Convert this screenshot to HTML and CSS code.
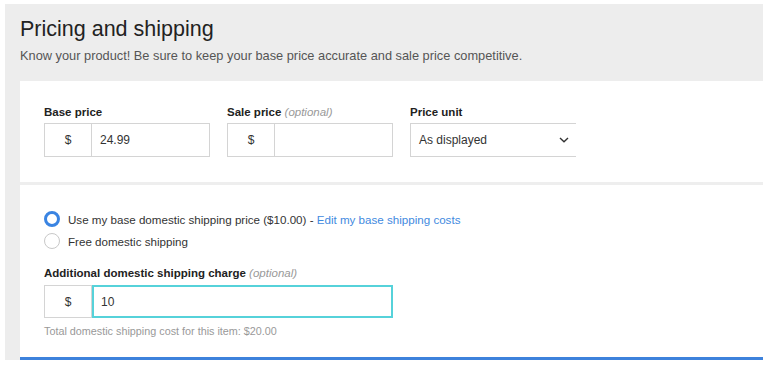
FILE: index.html
```html
<!DOCTYPE html>
<html lang="en">
<head>
<meta charset="utf-8">
<title>Pricing and shipping</title>
<link rel="stylesheet" href="styles.css">
</head>
<body>
<div class="panel">
  <header class="panel-head">
    <h1 class="title">Pricing and shipping</h1>
    <p class="subtitle">Know your product! Be sure to keep your base price accurate and sale price competitive.</p>
  </header>
  <div class="card">
    <section class="section prices">
      <div class="field">
        <label class="label">Base price</label>
        <div class="input-group">
          <span class="prefix">$</span>
          <span class="value">24.99</span>
        </div>
      </div>
      <div class="field">
        <label class="label">Sale price <em class="optional">(optional)</em></label>
        <div class="input-group">
          <span class="prefix">$</span>
          <span class="value"></span>
        </div>
      </div>
      <div class="field">
        <label class="label">Price unit</label>
        <div class="select">
          <span class="value">As displayed</span>
          <svg class="chevron" width="10" height="6" viewBox="0 0 10 6"><path d="M1 1 L5 4.8 L9 1" fill="none" stroke="#333" stroke-width="1.4"/></svg>
        </div>
      </div>
    </section>
    <section class="section shipping">
      <div class="radio-row">
        <span class="radio radio-on"></span>
        <span class="radio-text">Use my base domestic shipping price ($10.00) - <a class="link" href="#">Edit my base shipping costs</a></span>
      </div>
      <div class="radio-row">
        <span class="radio"></span>
        <span class="radio-text">Free domestic shipping</span>
      </div>
      <label class="label label-extra">Additional domestic shipping charge <em class="optional">(optional)</em></label>
      <div class="input-group wide">
        <span class="prefix">$</span>
        <span class="value focused">10</span>
      </div>
      <p class="helper">Total domestic shipping cost for this item: $20.00</p>
    </section>
  </div>
</div>
</body>
</html>
```

FILE: styles.css
```css
* { box-sizing: border-box; }

body {
  margin: 0;
  background: #ffffff;
  font-family: "Liberation Sans", Arial, Helvetica, sans-serif;
  color: #222;
}

.panel {
  margin: 4px 0 0 5px;
  width: 758px;
  background: #ededed;
  padding: 12px 0 0 15px;
}

.title {
  margin: 0;
  font-size: 21.5px;
  line-height: 26px;
  font-weight: normal;
  color: #222;
}

.subtitle {
  margin: 6px 0 0 0;
  font-size: 12.8px;
  line-height: 16px;
  color: #555;
}

.card {
  margin-top: 17px;
  background: #ffffff;
}

.section {
  padding-left: 24px;
}

.prices {
  display: flex;
  gap: 17px;
  padding-top: 24px;
  padding-bottom: 25px;
  border-bottom: 3px solid #eeeeee;
}

.label {
  display: block;
  font-size: 11.5px;
  line-height: 14px;
  font-weight: bold;
  color: #222;
  margin-bottom: 4px;
}

.optional {
  font-weight: normal;
  font-style: italic;
  color: #999;
}

.input-group {
  display: flex;
  width: 166px;
  height: 34px;
  border: 1px solid #d4d4d4;
  font-size: 12px;
  color: #333;
}

.prefix {
  flex: 0 0 47px;
  display: flex;
  align-items: center;
  justify-content: center;
  border-right: 1px solid #d4d4d4;
}

.value {
  flex: 1;
  display: flex;
  align-items: center;
  padding-left: 8px;
}

.select {
  display: flex;
  align-items: center;
  width: 166px;
  height: 34px;
  border: 1px solid #d4d4d4;
  border-right: none;
  font-size: 12px;
  color: #333;
  padding-right: 7px;
}

.select .value {
  padding-left: 8px;
}

.chevron {
  display: block;
}

.shipping {
  padding-top: 23px;
  padding-bottom: 19px;
  border-bottom: 3px solid #3d82dc;
}

.radio-row {
  display: flex;
  align-items: center;
  height: 22px;
  gap: 8px;
}

.radio {
  width: 16px;
  height: 16px;
  border-radius: 50%;
  border: 1px solid #c8c8c8;
  background: #fff;
  flex: 0 0 16px;
}

.radio-on {
  border: 3.5px solid #3a84e2;
}

.radio-text {
  font-size: 11.6px;
  color: #333;
}

.link {
  color: #3f8ae0;
  text-decoration: none;
}

.label-extra {
  margin-top: 14px;
  margin-bottom: 5px;
}

.input-group.wide {
  width: 349px;
  height: 33px;
}

.value.focused {
  border: 2px solid #56d2da;
  margin: -1px -1px -1px 0;
  padding-left: 7px;
}

.helper {
  margin: 6px 0 0 0;
  font-size: 10.8px;
  line-height: 14px;
  color: #999;
}
```
